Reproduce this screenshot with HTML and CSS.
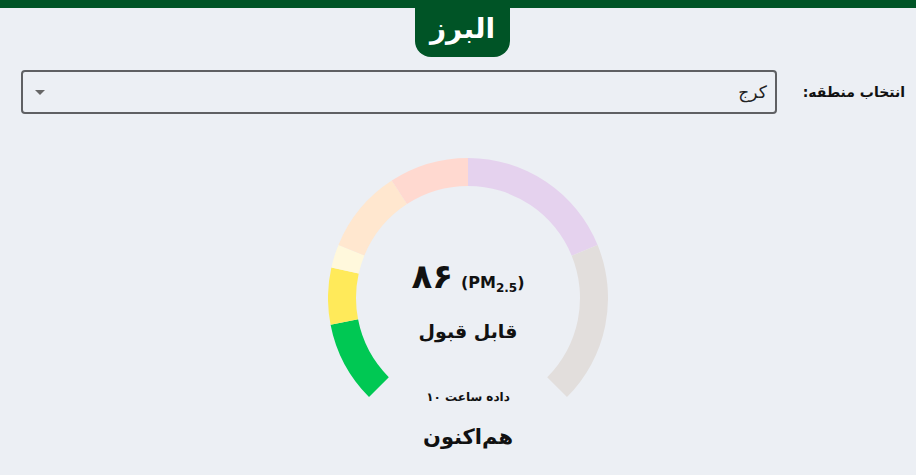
FILE: index.html
```html
<!DOCTYPE html>
<html lang="fa" dir="rtl">
<head>
    <meta charset="UTF-8">
    <meta name="viewport" content="width=device-width, initial-scale=1.0">
    <title>کیفیت هوا - البرز</title>
    <link rel="stylesheet" href="styles.css">
</head>
<body>
    <div class="topbar"></div>
    <div class="badge-wrap">
        <div class="badge">البرز</div>
    </div>

    <div class="region-row">
        <label class="region-label" for="region">انتخاب منطقه:</label>
        <div class="select">
            <span class="select-value">کرج</span>
            <span class="select-arrow"></span>
        </div>
    </div>

    <div class="gauge">
        <svg class="gauge-svg" id="gauge-svg" width="280" height="280" viewBox="0 0 280 280"></svg>
        <div class="gauge-text">
            <div class="value"><span class="num">۸۶</span> <span class="unit">(PM<sub>2.5</sub>)</span></div>
            <div class="status">قابل قبول</div>
            <div class="hour">داده ساعت ۱۰</div>
            <div class="now">هم‌اکنون</div>
        </div>
    </div>

    <script>
        // بخش‌های گیج (زاویه از بالا، ساعتگرد)
        const segments = [
            [-135, -101, '#00c853'],
            [-101, -77.4, '#ffea5a'],
            [-77.4, -67.7, '#fff8dc'],
            [-67.7, -33, '#ffe7cf'],
            [-33, 0, '#ffd9d0'],
            [0, 67.8, '#e5d2ee'],
            [67.8, 135, '#e2dedc']
        ];

        function pt(r, deg) {
            const a = deg * Math.PI / 180;
            return (140 + r * Math.sin(a)).toFixed(2) + ' ' + (140 - r * Math.cos(a)).toFixed(2);
        }

        const svg = document.getElementById('gauge-svg');
        const R = 140, r = 112;
        segments.forEach(s => {
            const d = 'M ' + pt(R, s[0]) +
                ' A ' + R + ' ' + R + ' 0 0 1 ' + pt(R, s[1]) +
                ' L ' + pt(r, s[1]) +
                ' A ' + r + ' ' + r + ' 0 0 0 ' + pt(r, s[0]) + ' Z';
            const path = document.createElementNS('http://www.w3.org/2000/svg', 'path');
            path.setAttribute('d', d);
            path.setAttribute('fill', s[2]);
            svg.appendChild(path);
        });
    </script>
</body>
</html>
```

FILE: styles.css
```css
body {
    margin: 0;
    background-color: #eceff4;
    font-family: "DejaVu Sans", sans-serif;
    color: #111;
}
.topbar {
    height: 8px;
    background-color: #005426;
}
.badge-wrap {
    display: flex;
    justify-content: center;
    padding-left: 9px;
}
.badge {
    width: 95px;
    height: 49px;
    background-color: #005426;
    color: white;
    font-size: 28px;
    font-weight: bold;
    text-align: center;
    line-height: 42px;
    border-radius: 0 0 16px 16px;
}
.region-row {
    display: flex;
    align-items: center;
    gap: 26px;
    padding: 13px 11px 0 21px;
}
.region-label {
    font-size: 14px;
    font-weight: bold;
    white-space: nowrap;
}
.select {
    width: 756px;
    box-sizing: border-box;
    height: 44px;
    border: 2px solid #5f6063;
    border-radius: 4px;
    display: flex;
    align-items: center;
    justify-content: space-between;
    padding: 0 8px 0 12px;
    margin-right: auto;
}
.select-value {
    font-size: 17px;
    color: #222;
}
.select-arrow {
    width: 0;
    height: 0;
    border-left: 5px solid transparent;
    border-right: 5px solid transparent;
    border-top: 5px solid #666;
}
.gauge {
    display: grid;
    justify-content: center;
    margin-top: 44px;
    padding-left: 20px;
}
.gauge-svg,
.gauge-text {
    grid-area: 1 / 1;
}
.gauge-text {
    display: flex;
    flex-direction: column;
    align-items: center;
    padding-top: 98px;
}
.value {
    direction: ltr;
    display: flex;
    align-items: baseline;
    gap: 8px;
    height: 40px;
}
.num {
    font-size: 34px;
    font-weight: bold;
}
.unit {
    font-size: 16px;
    font-weight: bold;
}
.unit sub {
    font-size: 12px;
}
.status {
    margin-top: 24px;
    font-size: 19px;
    font-weight: bold;
}
.hour {
    margin-top: 48px;
    font-size: 12px;
    font-weight: bold;
}
.now {
    margin-top: 21px;
    font-size: 21px;
    font-weight: bold;
}
```
